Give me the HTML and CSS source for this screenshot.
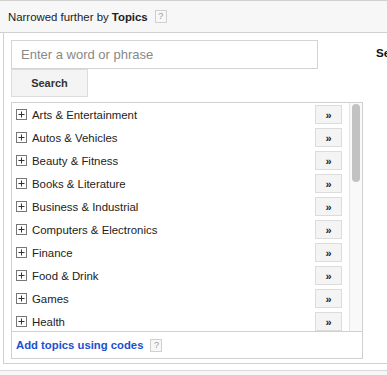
FILE: index.html
```html
<!DOCTYPE html>
<html>
<head>
<meta charset="utf-8">
<link rel="stylesheet" href="styles.css">
</head>
<body>
<div class="header">
  <span class="title">Narrowed further by <b>Topics</b></span>
  <span class="help">?</span>
</div>
<div class="panel">
  <div class="left">
    <div class="search-input">Enter a word or phrase</div>
    <div class="search-btn">Search</div>
    <div class="box">
      <div class="rows-wrap">
        <div class="rows">
          <div class="row"><span class="plus"><svg width="11" height="11" viewBox="0 0 11 11"><rect x="0.5" y="0.5" width="10" height="10" fill="#fff" stroke="#777"/><path d="M2.5 5.5h6M5.5 2.5v6" stroke="#333" stroke-width="1"/></svg></span><span class="label">Arts &amp; Entertainment</span><span class="add">»</span></div>
          <div class="row"><span class="plus"><svg width="11" height="11" viewBox="0 0 11 11"><rect x="0.5" y="0.5" width="10" height="10" fill="#fff" stroke="#777"/><path d="M2.5 5.5h6M5.5 2.5v6" stroke="#333" stroke-width="1"/></svg></span><span class="label">Autos &amp; Vehicles</span><span class="add">»</span></div>
          <div class="row"><span class="plus"><svg width="11" height="11" viewBox="0 0 11 11"><rect x="0.5" y="0.5" width="10" height="10" fill="#fff" stroke="#777"/><path d="M2.5 5.5h6M5.5 2.5v6" stroke="#333" stroke-width="1"/></svg></span><span class="label">Beauty &amp; Fitness</span><span class="add">»</span></div>
          <div class="row"><span class="plus"><svg width="11" height="11" viewBox="0 0 11 11"><rect x="0.5" y="0.5" width="10" height="10" fill="#fff" stroke="#777"/><path d="M2.5 5.5h6M5.5 2.5v6" stroke="#333" stroke-width="1"/></svg></span><span class="label">Books &amp; Literature</span><span class="add">»</span></div>
          <div class="row"><span class="plus"><svg width="11" height="11" viewBox="0 0 11 11"><rect x="0.5" y="0.5" width="10" height="10" fill="#fff" stroke="#777"/><path d="M2.5 5.5h6M5.5 2.5v6" stroke="#333" stroke-width="1"/></svg></span><span class="label">Business &amp; Industrial</span><span class="add">»</span></div>
          <div class="row"><span class="plus"><svg width="11" height="11" viewBox="0 0 11 11"><rect x="0.5" y="0.5" width="10" height="10" fill="#fff" stroke="#777"/><path d="M2.5 5.5h6M5.5 2.5v6" stroke="#333" stroke-width="1"/></svg></span><span class="label">Computers &amp; Electronics</span><span class="add">»</span></div>
          <div class="row"><span class="plus"><svg width="11" height="11" viewBox="0 0 11 11"><rect x="0.5" y="0.5" width="10" height="10" fill="#fff" stroke="#777"/><path d="M2.5 5.5h6M5.5 2.5v6" stroke="#333" stroke-width="1"/></svg></span><span class="label">Finance</span><span class="add">»</span></div>
          <div class="row"><span class="plus"><svg width="11" height="11" viewBox="0 0 11 11"><rect x="0.5" y="0.5" width="10" height="10" fill="#fff" stroke="#777"/><path d="M2.5 5.5h6M5.5 2.5v6" stroke="#333" stroke-width="1"/></svg></span><span class="label">Food &amp; Drink</span><span class="add">»</span></div>
          <div class="row"><span class="plus"><svg width="11" height="11" viewBox="0 0 11 11"><rect x="0.5" y="0.5" width="10" height="10" fill="#fff" stroke="#777"/><path d="M2.5 5.5h6M5.5 2.5v6" stroke="#333" stroke-width="1"/></svg></span><span class="label">Games</span><span class="add">»</span></div>
          <div class="row"><span class="plus"><svg width="11" height="11" viewBox="0 0 11 11"><rect x="0.5" y="0.5" width="10" height="10" fill="#fff" stroke="#777"/><path d="M2.5 5.5h6M5.5 2.5v6" stroke="#333" stroke-width="1"/></svg></span><span class="label">Health</span><span class="add">»</span></div>
        </div>
        <div class="scrollbar"><div class="thumb"></div></div>
      </div>
      <div class="footer">
        <a class="link" href="#">Add topics using codes</a>
        <span class="help">?</span>
      </div>
    </div>
  </div>
  <div class="right">
    <span class="se">Se</span>
  </div>
</div>
<div class="next"></div>
</body>
</html>
```

FILE: styles.css
```css
html, body {
  margin: 0;
  padding: 0;
  background: #fff;
  overflow: hidden;
}
body {
  font-family: "Liberation Sans", Arial, sans-serif;
  font-size: 11.4px;
  color: #222;
  width: 387px;
  height: 375px;
}
.header {
  height: 31px;
  border-top: 1px solid #d0d0d0;
  border-bottom: 1px solid #d0d0d0;
  background: #f7f7f7;
  display: flex;
  align-items: center;
  padding-left: 8px;
}
.title {
  font-size: 11.4px;
  color: #222;
}
.title b {
  font-weight: bold;
}
.help {
  display: inline-flex;
  align-items: center;
  justify-content: center;
  width: 10px;
  height: 11px;
  border: 1px solid #d0d0d0;
  background: #f7f7f7;
  color: #999;
  font-size: 9px;
  margin-left: 7px;
  line-height: 1;
}
.panel {
  margin-left: 3px;
  border-left: 1px solid #d0d0d0;
  border-bottom: 1px solid #d0d0d0;
  display: flex;
  padding: 7px 0 4px 7px;
  height: 319px;
}
.left {
  flex: none;
  width: 352px;
  display: flex;
  flex-direction: column;
}
.search-input {
  height: 27px;
  border: 1px solid #d4d4d4;
  box-sizing: content-box;
  display: flex;
  align-items: center;
  padding-left: 9px;
  width: 296px;
  font-size: 13px;
  color: #888;
}
.search-btn {
  width: 75px;
  height: 26px;
  border: 1px solid #dcdcdc;
  background: #f4f4f4;
  display: flex;
  align-items: center;
  justify-content: center;
  font-weight: bold;
  font-size: 11px;
  color: #333;
}
.box {
  margin-top: 5px;
  border: 1px solid #d0d0d0;
  display: flex;
  flex-direction: column;
}
.rows-wrap {
  display: flex;
  height: 228px;
  border-bottom: 1px solid #d0d0d0;
  overflow: hidden;
}
.rows {
  flex: 1;
  display: flex;
  flex-direction: column;
}
.row {
  height: 23px;
  flex: none;
  display: flex;
  align-items: center;
  padding-left: 4px;
}
.plus {
  width: 11px;
  height: 11px;
  display: flex;
  margin-right: 5px;
}
.label {
  flex: 1;
  font-size: 11.4px;
  color: #222;
}
.add {
  width: 25px;
  height: 17px;
  border: 1px solid #dcdcdc;
  background: #f4f4f4;
  display: flex;
  align-items: center;
  justify-content: center;
  font-weight: bold;
  font-size: 11px;
  color: #223;
  margin-right: 7px;
}
.scrollbar {
  width: 12px;
  border-left: 1px solid #e6e6e6;
  background: #f9f9f9;
  padding-top: 1px;
  display: flex;
  justify-content: center;
}
.thumb {
  width: 8px;
  height: 78px;
  border-radius: 4px;
  background: #c2c2c2;
}
.footer {
  height: 26px;
  display: flex;
  align-items: center;
  padding-left: 4px;
}
.link {
  color: #1a4fcf;
  font-weight: bold;
  font-size: 11.3px;
  text-decoration: none;
}
.right {
  flex: none;
  padding-left: 13px;
  padding-top: 6px;
}
.se {
  font-weight: bold;
  font-size: 11.6px;
  color: #111;
  white-space: nowrap;
}
.next {
  margin-top: 6px;
  border-top: 1px solid #d8d8d8;
  background: #f7f7f7;
  height: 10px;
}
```
